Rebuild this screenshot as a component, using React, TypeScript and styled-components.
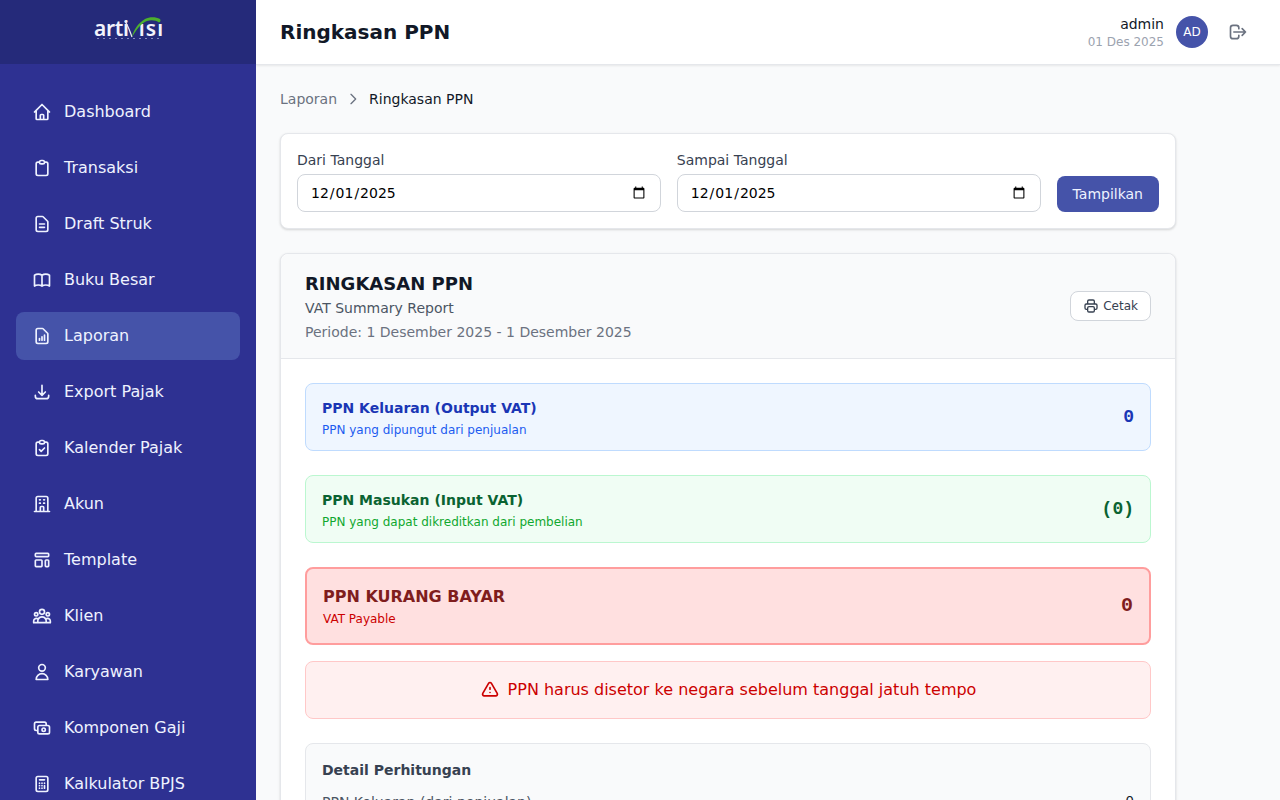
import type { ComponentType } from "react";
import styled, { createGlobalStyle } from "styled-components";
import {
  HiOutlineBookOpen,
  HiOutlineCalculator,
  HiOutlineCash,
  HiOutlineClipboard,
  HiOutlineClipboardCheck,
  HiOutlineDocumentReport,
  HiOutlineDocumentText,
  HiOutlineDownload,
  HiOutlineExclamation,
  HiOutlineHome,
  HiOutlineLogout,
  HiOutlineOfficeBuilding,
  HiOutlinePrinter,
  HiOutlineTemplate,
  HiOutlineUser,
  HiOutlineUserGroup,
} from "react-icons/hi";

const GlobalStyle = createGlobalStyle`
  * {
    box-sizing: border-box;
  }

  html,
  body {
    margin: 0;
    height: 100%;
    overflow: hidden;
  }

  body {
    font-family: "DejaVu Sans", sans-serif;
    background: #f9fafb;
    color: #111827;
  }
`;

const Layout = styled.div`
  display: flex;
  width: 1280px;
  height: 800px;
  overflow: hidden;
`;

const Sidebar = styled.aside`
  width: 256px;
  flex: none;
  height: 100%;
  overflow: hidden;
  background: #2e3192;
`;

const Brand = styled.div`
  height: 64px;
  display: flex;
  align-items: flex-start;
  justify-content: center;
  padding-top: 16px;
  background: #252a7a;
`;

const LogoWrap = styled.div`
  position: relative;
  display: flex;
  align-items: baseline;
  gap: 10px;
  width: 68px;
  height: 26px;
`;

const LogoText = styled.span<{ $wide?: boolean }>`
  font-family: "Noto Sans", sans-serif;
  font-size: 21px;
  line-height: 25px;
  font-weight: 600;
  letter-spacing: ${(p) => (p.$wide ? "1.2px" : "-0.3px")};
  color: #f3f3fb;
  white-space: nowrap;
`;

const LogoMark = styled.svg`
  position: absolute;
  top: 0;
  left: 0;
`;

const LogoDots = styled.span`
  position: absolute;
  left: 3px;
  right: 1px;
  top: 22px;
  height: 1px;
  background: repeating-linear-gradient(90deg, #8587bd 0 2px, transparent 2px 6px);
`;

const Nav = styled.nav`
  display: flex;
  flex-direction: column;
  gap: 8px;
  padding: 24px 16px;
`;

const NavItem = styled.a<{ $active?: boolean }>`
  display: flex;
  align-items: center;
  gap: 12px;
  height: 48px;
  padding: 0 16px;
  border-radius: 8px;
  font-size: 16px;
  line-height: 24px;
  color: #eef2ff;
  background: ${(p) => (p.$active ? "#4553a9" : "transparent")};
  svg {
    flex: none;
    width: 20px;
    height: 20px;
  }
`;

const Main = styled.div`
  flex: 1;
  min-width: 0;
  height: 100%;
  overflow: hidden;
`;

const Header = styled.header`
  position: relative;
  height: 65px;
  display: flex;
  align-items: center;
  justify-content: space-between;
  padding: 0 24px;
  background: #fff;
  border-bottom: 1px solid #e5e7eb;
  box-shadow: 0 1px 2px rgba(0, 0, 0, 0.08);
`;

const Title = styled.h1`
  margin: 0;
  font-size: 20px;
  line-height: 28px;
  font-weight: 700;
  color: #111827;
`;

const HeaderRight = styled.div`
  display: flex;
  align-items: center;
  gap: 12px;
`;

const UserInfo = styled.div`
  text-align: right;
`;

const UserName = styled.div`
  font-size: 14px;
  line-height: 20px;
  color: #111827;
`;

const UserDate = styled.div`
  font-size: 12px;
  line-height: 16px;
  color: #9ca3af;
`;

const Avatar = styled.div`
  width: 32px;
  height: 32px;
  border-radius: 50%;
  display: flex;
  align-items: center;
  justify-content: center;
  font-size: 12px;
  color: #fff;
  background: #4553a9;
`;

const LogoutButton = styled.button`
  display: flex;
  padding: 8px;
  border: 0;
  background: none;
  color: #6b7280;
  svg {
    width: 20px;
    height: 20px;
  }
`;

const Content = styled.main`
  width: 944px;
  padding: 24px;
`;

const Breadcrumb = styled.div`
  display: flex;
  align-items: center;
  gap: 8px;
  height: 20px;
  margin-bottom: 24px;
  font-size: 14px;
  color: #6b7280;
  strong {
    font-weight: 400;
    color: #111827;
  }
`;

const Card = styled.section`
  background: #fff;
  border: 1px solid #e5e7eb;
  border-radius: 8px;
  box-shadow: 0 1px 3px rgba(0, 0, 0, 0.1), 0 1px 2px rgba(0, 0, 0, 0.06);
`;

const FilterCard = styled(Card)`
  display: flex;
  align-items: flex-end;
  gap: 16px;
  padding: 16px;
  margin-bottom: 24px;
`;

const Field = styled.label`
  flex: 1;
  min-width: 0;
  display: block;
`;

const FieldLabel = styled.span`
  display: block;
  margin-bottom: 4px;
  font-size: 14px;
  line-height: 20px;
  color: #374151;
`;

const DateInput = styled.input`
  display: block;
  width: 100%;
  height: 38px;
  padding: 0 12px;
  border: 1px solid #d1d5db;
  border-radius: 8px;
  background: #fff;
  font-family: inherit;
  font-size: 14px;
  color: #000;
`;

const ShowButton = styled.button`
  height: 36px;
  padding: 0 16px;
  border: 0;
  border-radius: 8px;
  font-family: inherit;
  font-size: 14px;
  color: #eef2ff;
  background: #4553a9;
`;

const ReportHead = styled.div`
  display: flex;
  align-items: center;
  justify-content: space-between;
  padding: 16px 24px;
  background: #f9fafb;
  border-bottom: 1px solid #e5e7eb;
  border-radius: 8px 8px 0 0;
`;

const ReportTitle = styled.h2`
  margin: 0;
  font-size: 18px;
  line-height: 28px;
  font-weight: 700;
  color: #111827;
`;

const ReportSub = styled.div`
  font-size: 14px;
  line-height: 20px;
  color: #4b5563;
`;

const ReportPeriod = styled.div`
  margin-top: 4px;
  font-size: 14px;
  line-height: 20px;
  color: #6b7280;
`;

const PrintButton = styled.button`
  display: flex;
  align-items: center;
  gap: 4px;
  height: 30px;
  padding: 0 12px;
  border: 1px solid #d1d5db;
  border-radius: 8px;
  background: #fff;
  font-family: inherit;
  font-size: 12px;
  color: #374151;
  svg {
    width: 16px;
    height: 16px;
  }
`;

const ReportBody = styled.div`
  display: flex;
  flex-direction: column;
  padding: 24px;
`;

const tones = {
  blue: { bg: "#eff6ff", border: "#bfdbfe", title: "#1a36b5", sub: "#1d5cf0" },
  green: { bg: "#f0fdf4", border: "#bbf7d0", title: "#0a6332", sub: "#10a82f" },
  red: { bg: "#ffe0e0", border: "#ff9d9d", title: "#7f1d1d", sub: "#cc0000" },
};

type Tone = keyof typeof tones;

const SummaryRow = styled.div<{ $tone: Tone; $strong?: boolean }>`
  display: flex;
  align-items: center;
  justify-content: space-between;
  padding: ${(p) => (p.$strong ? "16px" : "14px 16px 12px")};
  margin-bottom: ${(p) => (p.$strong ? "16px" : "24px")};
  border-style: solid;
  border-width: ${(p) => (p.$strong ? "2px" : "1px")};
  border-color: ${(p) => tones[p.$tone].border};
  border-radius: 8px;
  background: ${(p) => tones[p.$tone].bg};
`;

const RowTitle = styled.div<{ $tone: Tone; $strong?: boolean }>`
  font-size: ${(p) => (p.$strong ? "16px" : "14px")};
  line-height: ${(p) => (p.$strong ? "24px" : "20px")};
  font-weight: 700;
  color: ${(p) => tones[p.$tone].title};
`;

const RowSub = styled.div<{ $tone: Tone; $strong?: boolean }>`
  margin-top: ${(p) => (p.$strong ? "2px" : "4px")};
  font-size: 12px;
  line-height: 16px;
  color: ${(p) => tones[p.$tone].sub};
`;

const RowValue = styled.div<{ $tone: Tone; $strong?: boolean }>`
  margin-bottom: ${(p) => (p.$strong ? "0" : "2px")};
  font-family: "Liberation Mono", monospace;
  font-size: ${(p) => (p.$strong ? "20px" : "18px")};
  line-height: 28px;
  font-weight: 700;
  color: ${(p) => tones[p.$tone].title};
`;

const Warning = styled.div`
  display: flex;
  align-items: center;
  justify-content: center;
  gap: 8px;
  height: 58px;
  margin-bottom: 24px;
  border: 1px solid #ffc8c8;
  border-radius: 8px;
  background: #fff0f0;
  font-size: 16px;
  line-height: 24px;
  color: #cc0000;
  svg {
    width: 20px;
    height: 20px;
  }
`;

const DetailBox = styled.div`
  padding: 16px;
  border: 1px solid #e5e7eb;
  border-radius: 8px;
  background: #f9fafb;
`;

const DetailTitle = styled.h3`
  margin: 0 0 12px;
  font-size: 14px;
  line-height: 20px;
  font-weight: 700;
  color: #374151;
`;

const DetailRow = styled.div`
  display: flex;
  justify-content: space-between;
  font-size: 14px;
  line-height: 20px;
  color: #4b5563;
`;

const DetailValue = styled.span`
  font-family: "Liberation Mono", monospace;
  color: #111827;
`;

type MenuEntry = {
  label: string;
  icon: ComponentType;
  active?: boolean;
};

const menu: MenuEntry[] = [
  { label: "Dashboard", icon: HiOutlineHome },
  { label: "Transaksi", icon: HiOutlineClipboard },
  { label: "Draft Struk", icon: HiOutlineDocumentText },
  { label: "Buku Besar", icon: HiOutlineBookOpen },
  { label: "Laporan", icon: HiOutlineDocumentReport, active: true },
  { label: "Export Pajak", icon: HiOutlineDownload },
  { label: "Kalender Pajak", icon: HiOutlineClipboardCheck },
  { label: "Akun", icon: HiOutlineOfficeBuilding },
  { label: "Template", icon: HiOutlineTemplate },
  { label: "Klien", icon: HiOutlineUserGroup },
  { label: "Karyawan", icon: HiOutlineUser },
  { label: "Komponen Gaji", icon: HiOutlineCash },
  { label: "Kalkulator BPJS", icon: HiOutlineCalculator },
];

function DateField({ label, value }: { label: string; value: string }) {
  return (
    <Field>
      <FieldLabel>{label}</FieldLabel>
      <DateInput type="date" defaultValue={value} />
    </Field>
  );
}

export default function App() {
  return (
    <Layout>
      <GlobalStyle />
      <Sidebar>
        <Brand>
          <LogoWrap>
            <LogoText>arti</LogoText>
            <LogoText $wide>ısı</LogoText>
            <LogoMark width="68" height="24" viewBox="0 0 68 24" aria-hidden="true">
              <path d="M31 5c3 5 5 10 7 16" fill="none" stroke="#e8e8f4" strokeWidth="1.200" />
              <path d="M38 21c1-6 6-14 13-18 5-2.500 11-2 15 0 1 1 .5 3-1 3.500-3-2.500-8-3-12-1.500C47 7.500 42 14 38 21z" fill="#4caf2e" />
            </LogoMark>
            <LogoDots />
          </LogoWrap>
        </Brand>
        <Nav>
          {menu.map(({ label, icon: Icon, active }) => (
            <NavItem key={label} $active={active}>
              <Icon />
              {label}
            </NavItem>
          ))}
        </Nav>
      </Sidebar>
      <Main>
        <Header>
          <Title>Ringkasan PPN</Title>
          <HeaderRight>
            <UserInfo>
              <UserName>admin</UserName>
              <UserDate>01 Des 2025</UserDate>
            </UserInfo>
            <Avatar>AD</Avatar>
            <LogoutButton>
              <HiOutlineLogout />
            </LogoutButton>
          </HeaderRight>
        </Header>
        <Content>
          <Breadcrumb>
            Laporan
            <svg width="16" height="16" viewBox="0 0 24 24" fill="none" stroke="#6b7280" strokeWidth="2" aria-hidden="true">
              <path d="M9 5l7 7-7 7" strokeLinecap="round" strokeLinejoin="round" />
            </svg>
            <strong>Ringkasan PPN</strong>
          </Breadcrumb>
          <FilterCard>
            <DateField label="Dari Tanggal" value="2025-12-01" />
            <DateField label="Sampai Tanggal" value="2025-12-01" />
            <ShowButton>Tampilkan</ShowButton>
          </FilterCard>
          <Card>
            <ReportHead>
              <div>
                <ReportTitle>RINGKASAN PPN</ReportTitle>
                <ReportSub>VAT Summary Report</ReportSub>
                <ReportPeriod>Periode: 1 Desember 2025 - 1 Desember 2025</ReportPeriod>
              </div>
              <PrintButton>
                <HiOutlinePrinter />
                Cetak
              </PrintButton>
            </ReportHead>
            <ReportBody>
              <SummaryRow $tone="blue">
                <div>
                  <RowTitle $tone="blue">PPN Keluaran (Output VAT)</RowTitle>
                  <RowSub $tone="blue">PPN yang dipungut dari penjualan</RowSub>
                </div>
                <RowValue $tone="blue">0</RowValue>
              </SummaryRow>
              <SummaryRow $tone="green">
                <div>
                  <RowTitle $tone="green">PPN Masukan (Input VAT)</RowTitle>
                  <RowSub $tone="green">PPN yang dapat dikreditkan dari pembelian</RowSub>
                </div>
                <RowValue $tone="green">(0)</RowValue>
              </SummaryRow>
              <SummaryRow $tone="red" $strong>
                <div>
                  <RowTitle $tone="red" $strong>PPN KURANG BAYAR</RowTitle>
                  <RowSub $tone="red" $strong>VAT Payable</RowSub>
                </div>
                <RowValue $tone="red" $strong>0</RowValue>
              </SummaryRow>
              <Warning>
                <HiOutlineExclamation />
                PPN harus disetor ke negara sebelum tanggal jatuh tempo
              </Warning>
              <DetailBox>
                <DetailTitle>Detail Perhitungan</DetailTitle>
                <DetailRow>
                  <span>PPN Keluaran (dari penjualan)</span>
                  <DetailValue>0</DetailValue>
                </DetailRow>
              </DetailBox>
            </ReportBody>
          </Card>
        </Content>
      </Main>
    </Layout>
  );
}
